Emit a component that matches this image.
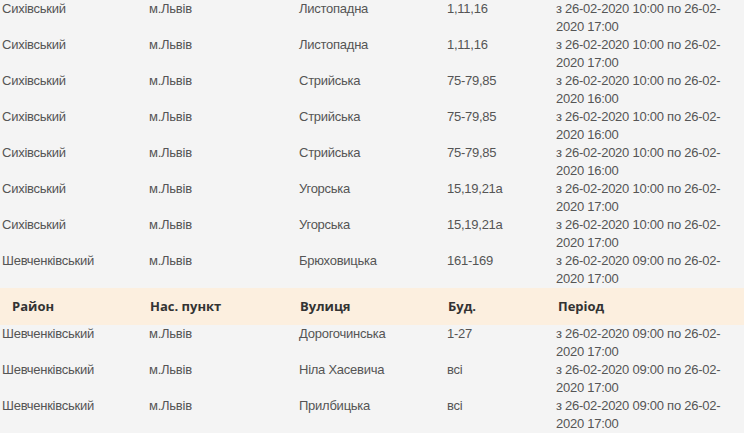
import React from "react";

type Row = [string, string, string, string, string, string];

const top: Row[] = [
  ["Сихівський", "м.Львів", "Листопадна", "1,11,16", "10:00", "17:00"],
  ["Сихівський", "м.Львів", "Листопадна", "1,11,16", "10:00", "17:00"],
  ["Сихівський", "м.Львів", "Стрийська", "75-79,85", "10:00", "16:00"],
  ["Сихівський", "м.Львів", "Стрийська", "75-79,85", "10:00", "16:00"],
  ["Сихівський", "м.Львів", "Стрийська", "75-79,85", "10:00", "16:00"],
  ["Сихівський", "м.Львів", "Угорська", "15,19,21а", "10:00", "17:00"],
  ["Сихівський", "м.Львів", "Угорська", "15,19,21а", "10:00", "17:00"],
  ["Шевченківський", "м.Львів", "Брюховицька", "161-169", "09:00", "17:00"],
];

const bottom: Row[] = [
  ["Шевченківський", "м.Львів", "Дорогочинська", "1-27", "09:00", "17:00"],
  ["Шевченківський", "м.Львів", "Ніла Хасевича", "всі", "09:00", "17:00"],
  ["Шевченківський", "м.Львів", "Прилбицька", "всі", "09:00", "17:00"],
];

const cols = "grid grid-cols-[147px_150px_148px_109px_1fr]";

function DataRow({ r }: { r: Row }) {
  return (
    <div className={`${cols} h-[36px] text-[13px] leading-[18px] text-[#555555] tracking-[-0.25px]`}>
      <div className="pl-[2px]">{r[0]}</div>
      <div className="pl-[2px]">{r[1]}</div>
      <div className="pl-[2px]">{r[2]}</div>
      <div className="pl-[2px]">{r[3]}</div>
      <div className="pl-[2px]">
        <div>з 26-02-2020 {r[4]} по 26-02-</div>
        <div>2020 {r[5]}</div>
      </div>
    </div>
  );
}

export default function App() {
  return (
    <div
      className="w-[744px] h-[433px] overflow-hidden bg-[#f4f4f4]"
      style={{ fontFamily: '"Liberation Sans", Arial, sans-serif' }}
    >
      {top.map((r, i) => (
        <DataRow key={"t" + i} r={r} />
      ))}
      <div
        className={`${cols} h-[37px] items-center bg-[#fcefdf] text-[13px] leading-[17px] font-bold text-[#333333]`}
        style={{ fontFamily: '"Open Sans", sans-serif' }}
      >
        <div className="pl-[12px]">Район</div>
        <div className="pl-[3px]">Нас. пункт</div>
        <div className="pl-[3px]">Вулиця</div>
        <div className="pl-[3px]">Буд.</div>
        <div className="pl-[4px]">Період</div>
      </div>
      {bottom.map((r, i) => (
        <DataRow key={"b" + i} r={r} />
      ))}
    </div>
  );
}
